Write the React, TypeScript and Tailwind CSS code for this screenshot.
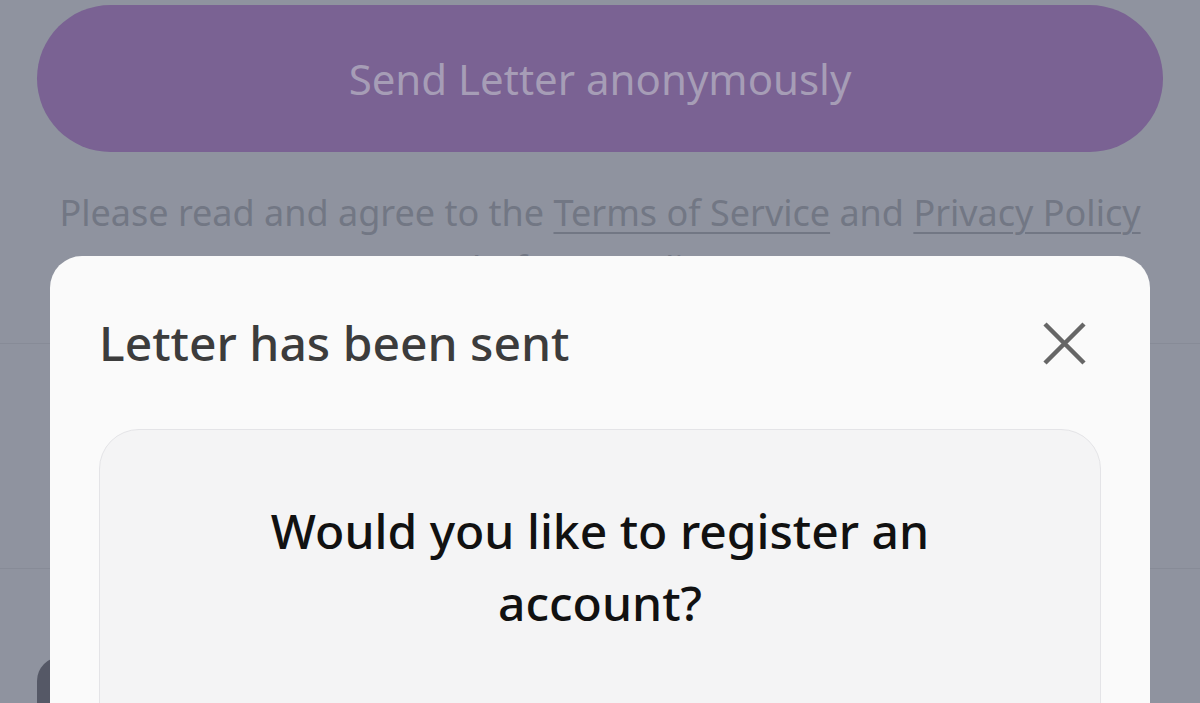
const font = { fontFamily: '"Noto Sans", "Open Sans", sans-serif' };

const CloseIcon = () => (
  <svg width="43" height="43" viewBox="0 0 43 43" className="text-[#666666]">
    <path d="M2 2L41 41M41 2L2 41" stroke="currentColor" strokeWidth="4.5" />
  </svg>
);

const App = () => {
  return (
    <div className="relative h-[703px] w-[1200px] overflow-hidden bg-[#8f939f]" style={font}>
      {/* page behind the overlay */}
      <div className="flex flex-col">
        <div className="px-[37px] pt-[5px]">
          <button className="flex h-[147px] w-full items-center justify-center rounded-full bg-[#7a6293] text-[42px] text-[#a69db6]">
            Send Letter anonymously
          </button>
        </div>
        <p className="mt-[33px] px-[40px] text-center text-[36px] leading-[56px] text-[#727784]">
          Please read and agree to the{' '}
          <span className="underline decoration-2 underline-offset-[6px]">Terms of Service</span> and{' '}
          <span className="underline decoration-2 underline-offset-[6px]">Privacy Policy</span> before sending
        </p>
        <div className="mt-[46px] h-[225px] border-t border-[#878b97]" />
        <div className="border-t border-[#878b97] px-[37px] pt-[88px]">
          <div className="h-[60px] w-[200px] rounded-tl-[24px] bg-[#555866]" />
        </div>
      </div>

      {/* dialog */}
      <div className="absolute left-[50px] right-[50px] top-[256px] h-[520px] rounded-[32px] bg-[#fafafa] px-[49px]">
        <div className="mt-[60px] flex h-[54px] items-center justify-between">
          <h2 className="text-[48px] font-medium text-[#3c3c3c]">Letter has been sent</h2>
          <div className="mr-[15px]">
            <CloseIcon />
          </div>
        </div>
        <div className="mt-[59px] h-[400px] rounded-[40px] border border-[#e4e4e7] bg-[#f4f4f5] px-[60px] pt-[65px]">
          <p className="text-center text-[48px] font-medium leading-[72px] text-[#111111]">
            Would you like to register an
            <br />
            account?
          </p>
        </div>
      </div>
    </div>
  );
};

export default App;
